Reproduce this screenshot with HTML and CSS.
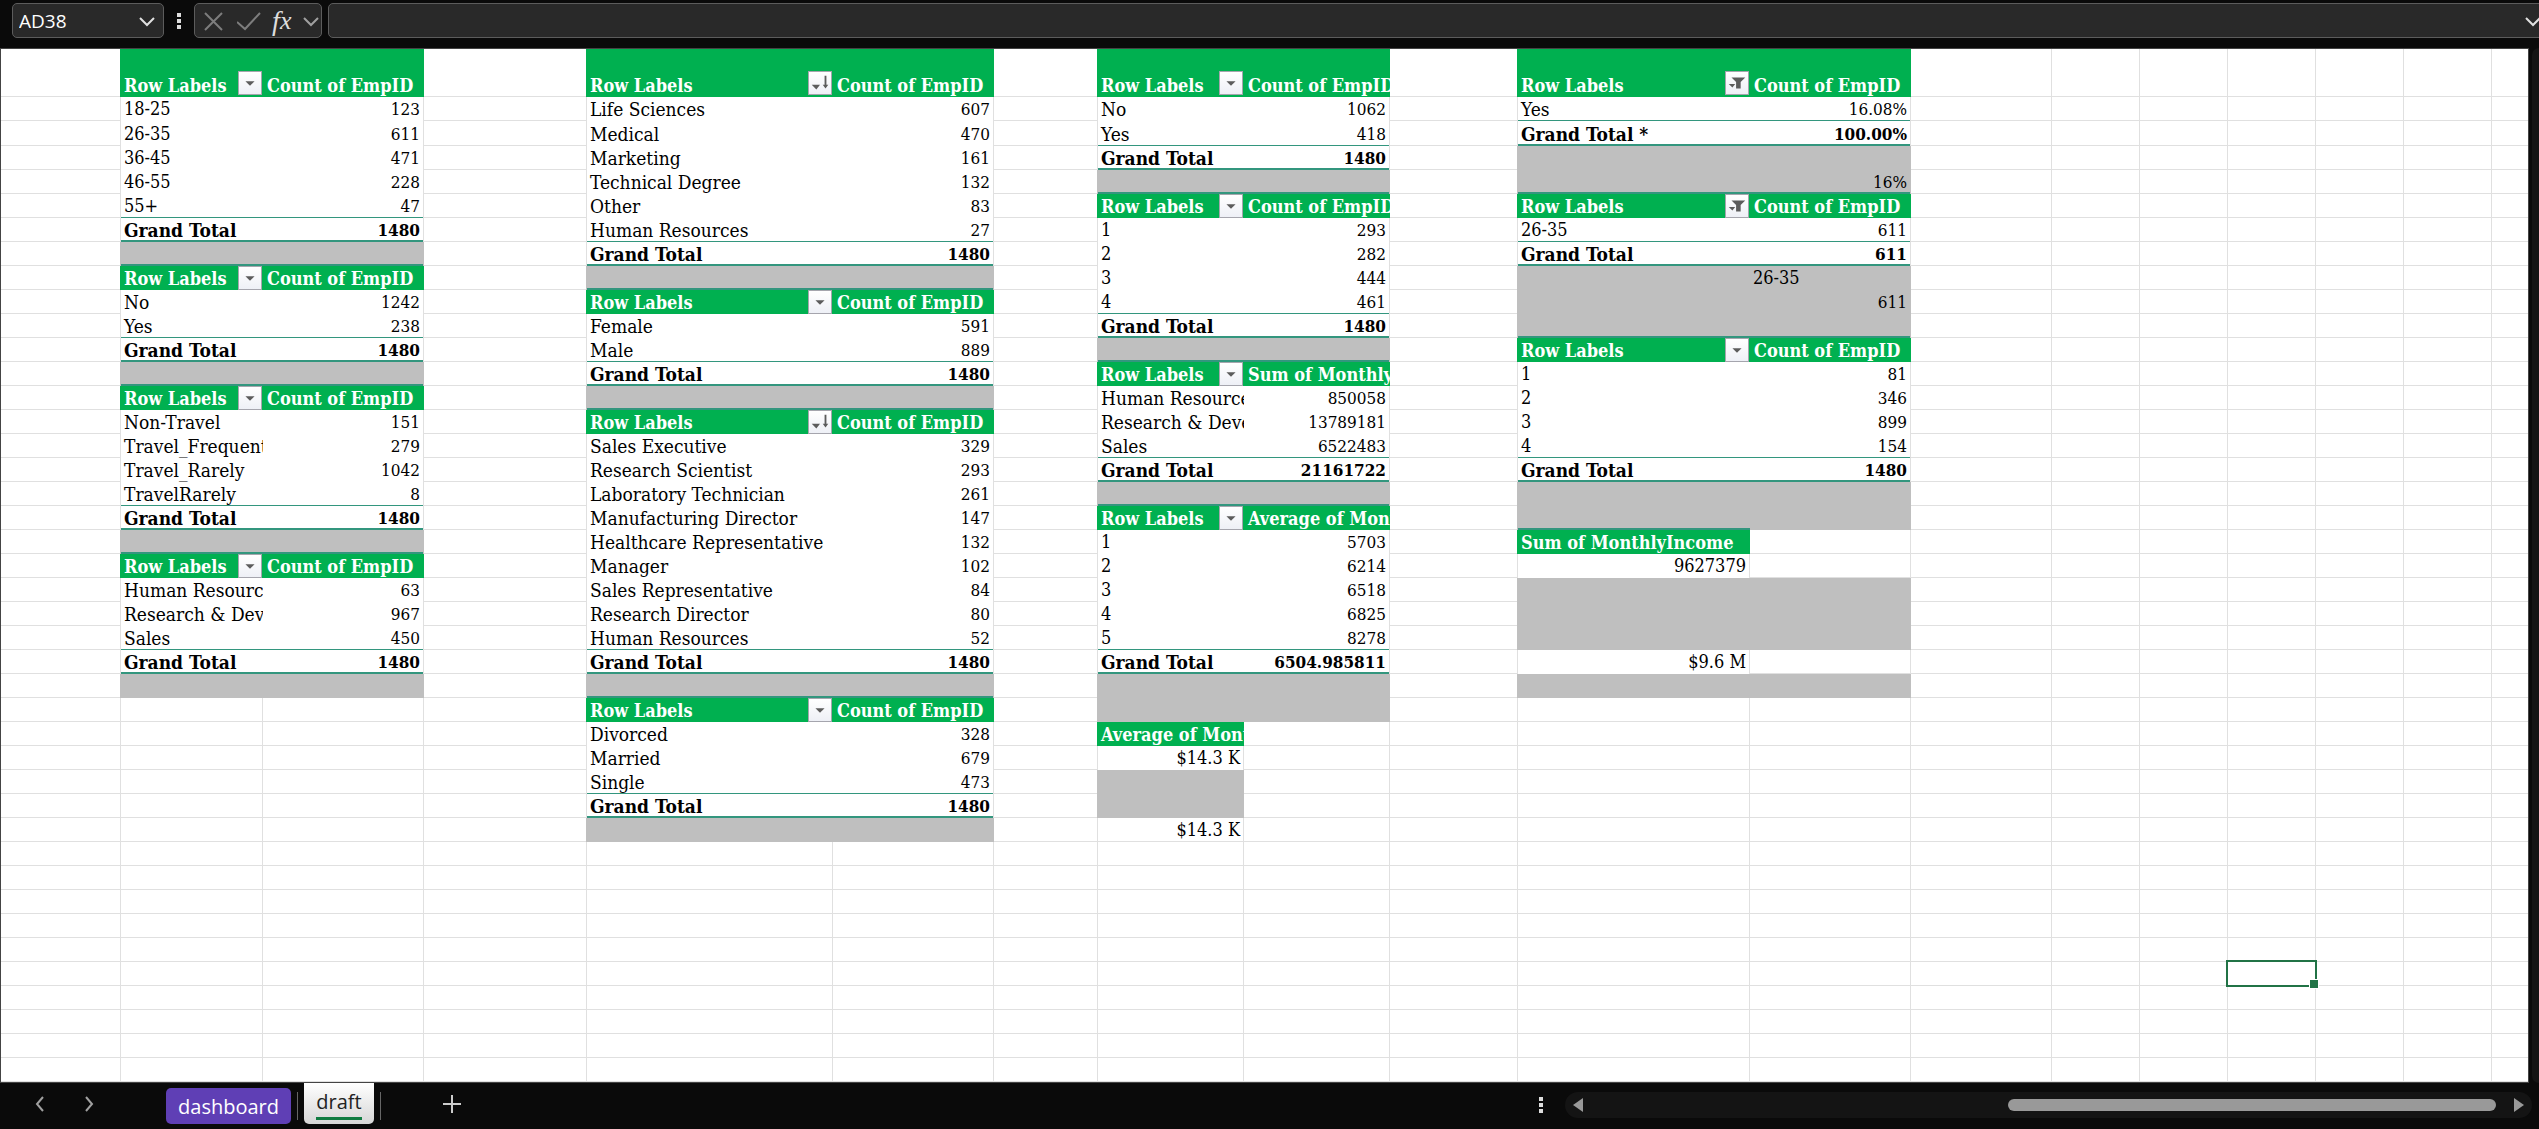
FILE: index.html
```html
<!DOCTYPE html>
<html lang="en">
<head>
<meta charset="utf-8">
<title>draft</title>
<link rel="stylesheet" href="styles.css">
</head>
<body>
<svg class="defs" aria-hidden="true">
  <symbol id="drop" viewBox="0 0 24 24"><path d="M7 10h10l-5 5z"/></symbol>
  <symbol id="sort" viewBox="0 0 24 24"><path d="M3 14h9l-4 5zM17 4h2v10h2l-3 4-3-4h2z"/></symbol>
  <symbol id="filter" viewBox="0 0 24 24"><path d="M3 13h7l-3 4zM6 6h15l-5 5v7h-5v-7z"/></symbol>
  <symbol id="chev" viewBox="0 0 16 16"><path d="M1 5l7 7 7-7"/></symbol>
</svg>

<header class="formula-bar">
  <div class="box name-box">
    <input type="text" value="AD38" aria-label="Name Box">
    <button type="button" aria-label="Name list"><svg class="chev"><use href="#chev"/></svg></button>
  </div>
  <svg class="dots" viewBox="0 0 4 16"><path d="M0 0h4v4H0zM0 6h4v4H0zM0 12h4v4H0z"/></svg>
  <div class="box fx-box">
    <button type="button" aria-label="Cancel"><svg class="mark" viewBox="0 0 24 20"><path d="M4 2l17 17M21 2L4 19"/></svg></button>
    <button type="button" aria-label="Enter"><svg class="mark" viewBox="0 0 24 20"><path d="M0 11l8 7L23 2"/></svg></button>
    <button type="button" class="fx" aria-label="Insert Function">f<small>x</small></button>
    <button type="button" aria-label="Function list"><svg class="chev dim"><use href="#chev"/></svg></button>
  </div>
  <div class="box formula">
    <input type="text" aria-label="Formula">
    <button type="button" aria-label="Expand"><svg class="chev"><use href="#chev"/></svg></button>
  </div>
</header>

<main class="work">
<div class="sheet">
  <div class="lead"></div>

  <div class="group g1">
  <table>
    <colgroup><col class="key"><col></colgroup>
    <tr class="head top"><th>Row Labels<button type="button" aria-label="Filter"><svg><use href="#drop"/></svg></button></th><th>Count of EmpID</th></tr>
    <tr class="code"><td>18-25</td><td>123</td></tr>
    <tr class="code tall"><td>26-35</td><td>611</td></tr>
    <tr class="code"><td>36-45</td><td>471</td></tr>
    <tr class="code"><td>46-55</td><td>228</td></tr>
    <tr class="code last"><td>55+</td><td>47</td></tr>
    <tr class="total"><td>Grand Total</td><td>1480</td></tr>
    <tr class="gap rule"><td></td><td></td></tr>
    <tr class="head"><th>Row Labels<button type="button" aria-label="Filter"><svg><use href="#drop"/></svg></button></th><th>Count of EmpID</th></tr>
    <tr><td>No</td><td>1242</td></tr>
    <tr class="last"><td>Yes</td><td>238</td></tr>
    <tr class="total"><td>Grand Total</td><td>1480</td></tr>
    <tr class="gap rule"><td></td><td></td></tr>
    <tr class="head"><th>Row Labels<button type="button" aria-label="Filter"><svg><use href="#drop"/></svg></button></th><th>Count of EmpID</th></tr>
    <tr><td>Non-Travel</td><td>151</td></tr>
    <tr><td>Travel_Frequently</td><td>279</td></tr>
    <tr><td>Travel_Rarely</td><td>1042</td></tr>
    <tr class="last"><td>TravelRarely</td><td>8</td></tr>
    <tr class="total"><td>Grand Total</td><td>1480</td></tr>
    <tr class="gap rule"><td></td><td></td></tr>
    <tr class="head"><th>Row Labels<button type="button" aria-label="Filter"><svg><use href="#drop"/></svg></button></th><th>Count of EmpID</th></tr>
    <tr><td>Human Resources</td><td>63</td></tr>
    <tr><td>Research &amp; Development</td><td>967</td></tr>
    <tr class="last"><td>Sales</td><td>450</td></tr>
    <tr class="total"><td>Grand Total</td><td>1480</td></tr>
    <tr class="gap"><td></td><td></td></tr>
  </table>
  </div>

  <div class="space s1"></div>

  <div class="group g2">
  <table>
    <colgroup><col class="key"><col></colgroup>
    <tr class="head top"><th>Row Labels<button type="button" aria-label="Sort"><svg><use href="#sort"/></svg></button></th><th>Count of EmpID</th></tr>
    <tr><td>Life Sciences</td><td>607</td></tr>
    <tr class="tall"><td>Medical</td><td>470</td></tr>
    <tr><td>Marketing</td><td>161</td></tr>
    <tr><td>Technical Degree</td><td>132</td></tr>
    <tr><td>Other</td><td>83</td></tr>
    <tr class="last"><td>Human Resources</td><td>27</td></tr>
    <tr class="total"><td>Grand Total</td><td>1480</td></tr>
    <tr class="gap rule"><td></td><td></td></tr>
    <tr class="head"><th>Row Labels<button type="button" aria-label="Filter"><svg><use href="#drop"/></svg></button></th><th>Count of EmpID</th></tr>
    <tr><td>Female</td><td>591</td></tr>
    <tr class="last"><td>Male</td><td>889</td></tr>
    <tr class="total"><td>Grand Total</td><td>1480</td></tr>
    <tr class="gap rule"><td></td><td></td></tr>
    <tr class="head"><th>Row Labels<button type="button" aria-label="Sort"><svg><use href="#sort"/></svg></button></th><th>Count of EmpID</th></tr>
    <tr><td>Sales Executive</td><td>329</td></tr>
    <tr><td>Research Scientist</td><td>293</td></tr>
    <tr><td>Laboratory Technician</td><td>261</td></tr>
    <tr><td>Manufacturing Director</td><td>147</td></tr>
    <tr><td>Healthcare Representative</td><td>132</td></tr>
    <tr><td>Manager</td><td>102</td></tr>
    <tr><td>Sales Representative</td><td>84</td></tr>
    <tr><td>Research Director</td><td>80</td></tr>
    <tr class="last"><td>Human Resources</td><td>52</td></tr>
    <tr class="total"><td>Grand Total</td><td>1480</td></tr>
    <tr class="gap rule"><td></td><td></td></tr>
    <tr class="head"><th>Row Labels<button type="button" aria-label="Filter"><svg><use href="#drop"/></svg></button></th><th>Count of EmpID</th></tr>
    <tr><td>Divorced</td><td>328</td></tr>
    <tr><td>Married</td><td>679</td></tr>
    <tr class="last"><td>Single</td><td>473</td></tr>
    <tr class="total"><td>Grand Total</td><td>1480</td></tr>
    <tr class="gap"><td></td><td></td></tr>
  </table>
  </div>

  <div class="space s2"></div>

  <div class="group g3">
  <table>
    <colgroup><col class="key"><col></colgroup>
    <tr class="head top"><th>Row Labels<button type="button" aria-label="Filter"><svg><use href="#drop"/></svg></button></th><th>Count of EmpID</th></tr>
    <tr><td>No</td><td>1062</td></tr>
    <tr class="last tall"><td>Yes</td><td>418</td></tr>
    <tr class="total"><td>Grand Total</td><td>1480</td></tr>
    <tr class="gap rule"><td></td><td></td></tr>
    <tr class="head"><th>Row Labels<button type="button" aria-label="Filter"><svg><use href="#drop"/></svg></button></th><th>Count of EmpID</th></tr>
    <tr class="code"><td>1</td><td>293</td></tr>
    <tr class="code"><td>2</td><td>282</td></tr>
    <tr class="code"><td>3</td><td>444</td></tr>
    <tr class="code last"><td>4</td><td>461</td></tr>
    <tr class="total"><td>Grand Total</td><td>1480</td></tr>
    <tr class="gap rule"><td></td><td></td></tr>
    <tr class="head"><th>Row Labels<button type="button" aria-label="Filter"><svg><use href="#drop"/></svg></button></th><th>Sum of MonthlyIncome</th></tr>
    <tr><td>Human Resources</td><td>850058</td></tr>
    <tr><td>Research &amp; Development</td><td>13789181</td></tr>
    <tr class="last"><td>Sales</td><td>6522483</td></tr>
    <tr class="total"><td>Grand Total</td><td>21161722</td></tr>
    <tr class="gap rule"><td></td><td></td></tr>
    <tr class="head"><th>Row Labels<button type="button" aria-label="Filter"><svg><use href="#drop"/></svg></button></th><th>Average of MonthlyIncome</th></tr>
    <tr class="code"><td>1</td><td>5703</td></tr>
    <tr class="code"><td>2</td><td>6214</td></tr>
    <tr class="code"><td>3</td><td>6518</td></tr>
    <tr class="code"><td>4</td><td>6825</td></tr>
    <tr class="code last"><td>5</td><td>8278</td></tr>
    <tr class="total"><td>Grand Total</td><td>6504.985811</td></tr>
    <tr class="gap"><td></td><td></td></tr>
    <tr class="gap"><td></td><td></td></tr>
    <tr class="head"><th>Average of MonthlyIncome</th><td class="blank"></td></tr>
    <tr><td class="num">$14.3 K</td><td class="blank"></td></tr>
    <tr class="gap"><td></td><td class="blank"></td></tr>
    <tr class="gap"><td></td><td class="blank"></td></tr>
    <tr><td class="num under">$14.3 K</td><td class="blank"></td></tr>
  </table>
  </div>

  <div class="space s3"></div>

  <div class="group g4">
  <table>
    <colgroup><col class="key"><col></colgroup>
    <tr class="head top"><th>Row Labels<button type="button" aria-label="Filter"><svg><use href="#filter"/></svg></button></th><th>Count of EmpID</th></tr>
    <tr class="last"><td>Yes</td><td>16.08%</td></tr>
    <tr class="total tall"><td>Grand Total *</td><td>100.00%</td></tr>
    <tr class="gap"><td></td><td></td></tr>
    <tr class="gap rule"><td></td><td>16%</td></tr>
    <tr class="head"><th>Row Labels<button type="button" aria-label="Filter"><svg><use href="#filter"/></svg></button></th><th>Count of EmpID</th></tr>
    <tr class="code last"><td>26-35</td><td>611</td></tr>
    <tr class="total"><td>Grand Total</td><td>611</td></tr>
    <tr class="gap"><td></td><td class="text">26-35</td></tr>
    <tr class="gap"><td></td><td>611</td></tr>
    <tr class="gap rule"><td></td><td></td></tr>
    <tr class="head"><th>Row Labels<button type="button" aria-label="Filter"><svg><use href="#drop"/></svg></button></th><th>Count of EmpID</th></tr>
    <tr class="code"><td>1</td><td>81</td></tr>
    <tr class="code"><td>2</td><td>346</td></tr>
    <tr class="code"><td>3</td><td>899</td></tr>
    <tr class="code last"><td>4</td><td>154</td></tr>
    <tr class="total"><td>Grand Total</td><td>1480</td></tr>
    <tr class="gap"><td></td><td></td></tr>
    <tr class="gap half-rule"><td></td><td></td></tr>
    <tr class="head"><th>Sum of MonthlyIncome</th><td class="blank"></td></tr>
    <tr><td class="num">9627379</td><td class="blank"></td></tr>
    <tr class="gap"><td></td><td></td></tr>
    <tr class="gap"><td></td><td></td></tr>
    <tr class="gap"><td></td><td></td></tr>
    <tr><td class="num">$9.6 M</td><td class="blank"></td></tr>
    <tr class="gap"><td></td><td></td></tr>
  </table>
  </div>

  <div class="col wide"></div>
  <div class="col"></div>
  <div class="col"></div>
  <div class="col active"><div class="selection"></div></div>
  <div class="col"></div>
  <div class="col"></div>
</div>
<div class="vscroll"></div>
</main>

<footer class="tab-bar">
  <nav class="arrows">
    <button type="button" aria-label="Previous sheet"><svg viewBox="0 0 10 16"><path d="M8 1L2 8l6 7"/></svg></button>
    <button type="button" aria-label="Next sheet"><svg viewBox="0 0 10 16"><path d="M2 1l6 7-6 7"/></svg></button>
  </nav>
  <nav class="tabs">
    <a class="tab dashboard" href="#dashboard">dashboard</a>
    <a class="tab draft" href="#draft"><span>draft</span></a>
    <button type="button" class="add" aria-label="New sheet"><svg viewBox="0 0 18 18"><path d="M9 0v18M0 9h18"/></svg></button>
  </nav>
  <svg class="dots" viewBox="0 0 4 16"><path d="M0 0h4v4H0zM0 6h4v4H0zM0 12h4v4H0z"/></svg>
  <div class="hscroll">
    <svg viewBox="0 0 10 14"><path d="M10 0v14L0 7z"/></svg>
    <div class="thumb"></div>
    <svg viewBox="0 0 10 14"><path d="M0 0v14l10-7z"/></svg>
  </div>
</footer>
</body>
</html>
```

FILE: styles.css
```css
:root {
  --line: #e0e0e0;
  --green: #00b050;
  --teal: #33967e;
  --gray: #bfbfbf;
}

* { box-sizing: border-box; }

body {
  margin: 0;
  height: 100vh;
  display: flex;
  flex-direction: column;
  overflow: hidden;
  background: #0a0a0a;
  font-family: "Open Sans", sans-serif;
}

button {
  margin: 0;
  padding: 0;
  border: 0;
  background: none;
  display: flex;
  align-items: center;
  justify-content: center;
}

.defs { position: absolute; width: 0; height: 0; }

/* Formula bar */
.formula-bar {
  flex: none;
  display: flex;
  align-items: flex-start;
  height: 48px;
  padding: 3px 0 0 12px;
}

.box {
  display: flex;
  align-items: center;
  height: 35px;
  border: 1px solid #5c5c5c;
  border-radius: 5px;
  background: #292929;
}

.box input {
  flex: 1;
  min-width: 0;
  padding: 0 6px;
  border: 0;
  background: none;
  color: #fff;
  font: 19px "Open Sans", sans-serif;
  outline: 0;
}

.name-box { width: 152px; padding-right: 8px; }

.chev {
  width: 16px;
  height: 16px;
  fill: none;
  stroke: #e0e0e0;
  stroke-width: 2;
}

.dim { stroke: #a0a0a0; }

.dots { width: 4px; height: 16px; fill: #ddd; }

.formula-bar .dots { margin: 10px 13px 0; }

.fx-box {
  width: 128px;
  padding: 0 2px 0 6px;
  justify-content: space-between;
}

.mark {
  width: 24px;
  height: 20px;
  fill: none;
  stroke: #7d7d7d;
  stroke-width: 2;
}

.fx {
  color: #ddd;
  font: italic 28px/30px "Liberation Serif", serif;
}

.fx small { font-size: 26px; }

.formula {
  flex: 1;
  margin-left: 6px;
  margin-right: -5px;
  padding-right: 2px;
}

/* Worksheet */
.work {
  flex: 1;
  min-height: 0;
  display: flex;
}

.sheet {
  flex: 1;
  min-width: 0;
  display: flex;
  overflow: hidden;
  border: 1px solid #444;
  background:
    linear-gradient(var(--line), var(--line)) 0 47px / 100% 1px no-repeat,
    linear-gradient(var(--line), var(--line)) 0 71px / 100% 1px no-repeat,
    repeating-linear-gradient(#fff 0 23px, var(--line) 23px 24px) 0 73px / 100% 1200px no-repeat,
    #fff;
}

.lead { flex: none; width: 119px; }

.space { flex: none; }
.s1 { width: 162px; }
.s2 { width: 103px; }
.s3 { width: 127px; }

.group {
  flex: none;
  background:
    linear-gradient(var(--line), var(--line)) calc(var(--key) - 1px) 0 / 1px 100% no-repeat;
  border: solid var(--line);
  border-width: 0 1px;
  width: var(--pair);
}

.g1 { --key: 142px; --pair: 304px; }
.g2 { --key: 246px; --pair: 408px; }
.g3 { --key: 146px; --pair: 293px; }
.g4 { --key: 232px; --pair: 394px; }

table {
  width: var(--pair);
  margin: 0 -1px;
  border-spacing: 0;
  table-layout: fixed;
  color: #000;
  font: 17px/22px "DejaVu Serif Condensed", "DejaVu Serif", serif;
}

.key { width: calc(var(--key) + 1px); }

th,
td {
  height: 24px;
  padding: 0 3px 1px;
  overflow: hidden;
  vertical-align: bottom;
  white-space: nowrap;
  text-align: right;
  background: #fff;
}

td:first-child { border-left: 1px solid var(--line); }
td:last-child { border-right: 1px solid var(--line); }

td:first-child,
.text { text-align: left; }

td:first-child { font-size: 19px; }

.code td:first-child,
.text { font-size: 18px; }

td.num {
  font-size: 18px;
  text-align: right;
  border-right: 1px solid var(--line);
}

.tall td { height: 25px; }

.head th {
  position: relative;
  padding: 0 3px 0 4px;
  background: var(--green);
  color: #fff;
  font-size: 18px;
  text-align: left;
}

.top th { height: 48px; }

.head button {
  position: absolute;
  right: 1px;
  bottom: 0;
  width: 24px;
  height: 24px;
  border: 1px solid #a5a5ad;
  background: linear-gradient(#fff, #eef0f6);
}

.top button { bottom: 2px; }

.head svg { width: 22px; height: 22px; fill: #5c5c5c; }

.last td { box-shadow: inset 0 -1px var(--teal); }

.total td,
.rule td,
.half-rule td:first-child { box-shadow: inset 0 -2px var(--teal); }

.total td { font-weight: bold; }

.gap td {
  background: var(--gray);
  border-color: var(--gray);
}

td.blank,
.gap td.blank {
  background: none;
  border-right-color: var(--line);
  border-bottom: 1px solid var(--line);
}

td.under { border-bottom: 1px solid var(--line); padding-bottom: 0; }

.col {
  flex: none;
  width: 88px;
  border-right: 1px solid var(--line);
}

.wide { width: 141px; }

.active { position: relative; }

.selection {
  position: absolute;
  left: -2px;
  top: 911px;
  width: 91px;
  height: 27px;
  border: 2px solid #217346;
}

.selection::after {
  content: "";
  position: absolute;
  right: -4px;
  bottom: -4px;
  width: 8px;
  height: 8px;
  border: 1px solid #fff;
  background: #217346;
}

.vscroll {
  flex: none;
  width: 7px;
  margin-left: 3px;
  border-radius: 7px 0 0 7px;
  background: #141414;
}

/* Sheet tabs */
.tab-bar {
  flex: none;
  height: 46px;
  display: flex;
  align-items: center;
}

.arrows {
  display: flex;
  gap: 39px;
  margin: 0 72px 4px 35px;
}

.arrows svg {
  width: 10px;
  height: 16px;
  fill: none;
  stroke: #a0a0a0;
  stroke-width: 2;
}

.tabs {
  flex: 1;
  display: flex;
  align-self: stretch;
  align-items: flex-start;
}

.tab {
  font-size: 20px;
  text-decoration: none;
  text-align: center;
}

.dashboard {
  width: 125px;
  height: 36px;
  margin-top: 5px;
  border-radius: 5px;
  background: #5f3fb5;
  color: #fff;
  line-height: 38px;
}

.draft {
  position: relative;
  width: 70px;
  height: 41px;
  margin: 0 13px;
  border-radius: 0 0 5px 5px;
  background: linear-gradient(#fff, #d6d6d6);
  color: #222;
  line-height: 34px;
}

.draft span {
  display: inline-block;
  height: 37px;
  padding-top: 2px;
  border-bottom: 3px solid #107c41;
}

.draft::before,
.draft::after {
  content: "";
  position: absolute;
  top: 9px;
  width: 1px;
  height: 28px;
  background: #666;
}

.draft::before { left: -7px; }
.draft::after { right: -7px; }

.add { margin: 12px 0 0 56px; }

.add svg { width: 18px; height: 18px; stroke: #ccc; stroke-width: 2; }

.tab-bar > .dots { margin: 0 22px 2px 0; }

.hscroll {
  flex: none;
  width: 967px;
  max-width: 50%;
  height: 26px;
  margin: 0 7px 2px 0;
  padding: 0 8px;
  display: flex;
  align-items: center;
  justify-content: space-between;
  border-radius: 13px;
  background: #141414;
}

.hscroll svg { width: 10px; height: 14px; fill: #999; }

.thumb {
  width: 488px;
  height: 12px;
  margin: 0 18px 0 auto;
  border-radius: 6px;
  background: #999;
}
```
